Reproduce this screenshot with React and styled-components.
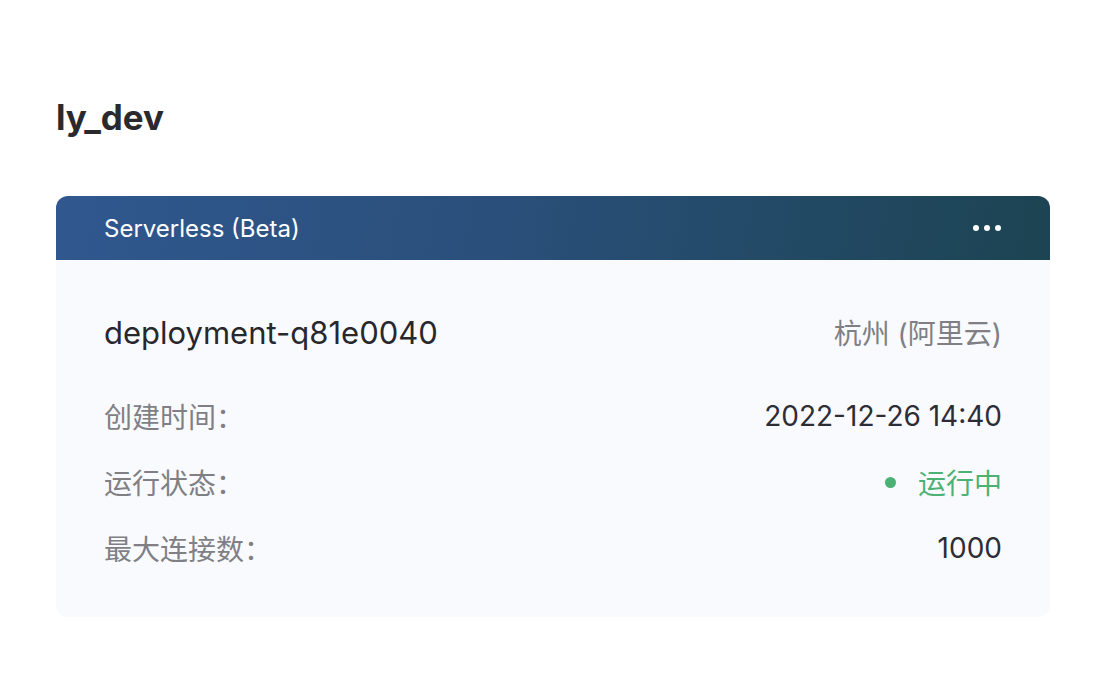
import styled, { createGlobalStyle } from "styled-components";

const GlobalStyle = createGlobalStyle`
  body {
    margin: 0;
    background: #ffffff;
    font-family: Inter, "Noto Sans CJK SC", sans-serif;
  }
`;

const Page = styled.div`
  padding: 95px 62px 0 56px;
`;

const Title = styled.h1`
  margin: 0 0 57px;
  font-size: 35px;
  line-height: 44px;
  font-weight: 700;
  color: #2a2a2e;
`;

const Card = styled.div`
  border-radius: 12px;
  overflow: hidden;
  background: #f9fafe;
`;

const CardHeader = styled.div`
  height: 64px;
  display: flex;
  align-items: center;
  justify-content: space-between;
  padding: 0 48px;
  background: linear-gradient(100deg, #30588f 0%, #2a4f7a 45%, #1c4452 100%);
  color: #ffffff;
  font-size: 24px;
`;

const Dots = styled.div`
  display: flex;
  gap: 5px;
  margin-right: 1px;
  span {
    width: 6px;
    height: 6px;
    border-radius: 50%;
    background: #ffffff;
  }
`;

const CardBody = styled.div`
  padding: 50px 48px 36px;
  display: flex;
  flex-direction: column;
`;

const Row = styled.div`
  display: flex;
  align-items: center;
  justify-content: space-between;
  height: ${(p) => p.$h || 66}px;
  margin-bottom: ${(p) => p.$gap || 0}px;
`;

const Name = styled.div`
  font-size: 31px;
  color: #27272d;
`;

const Label = styled.div`
  font-size: 28px;
  color: #7f7f84;
`;

const Value = styled.div`
  font-size: 28px;
  color: ${(p) => p.$color || "#2d2d35"};
  display: flex;
  align-items: center;
  gap: 22px;
`;

const Dot = styled.span`
  width: 11px;
  height: 11px;
  border-radius: 50%;
  background: #4cb174;
`;

export default function App() {
  return (
    <Page>
      <GlobalStyle />
      <Title>ly_dev</Title>
      <Card>
        <CardHeader>
          <span>Serverless (Beta)</span>
          <Dots>
            <span />
            <span />
            <span />
          </Dots>
        </CardHeader>
        <CardBody>
          <Row $h={44} $gap={29}>
            <Name>deployment-q81e0040</Name>
            <Label>杭州 (阿里云)</Label>
          </Row>
          <Row>
            <Label>创建时间：</Label>
            <Value>2022-12-26 14:40</Value>
          </Row>
          <Row>
            <Label>运行状态：</Label>
            <Value $color="#4cb174">
              <Dot />
              运行中
            </Value>
          </Row>
          <Row>
            <Label>最大连接数：</Label>
            <Value>1000</Value>
          </Row>
        </CardBody>
      </Card>
    </Page>
  );
}
